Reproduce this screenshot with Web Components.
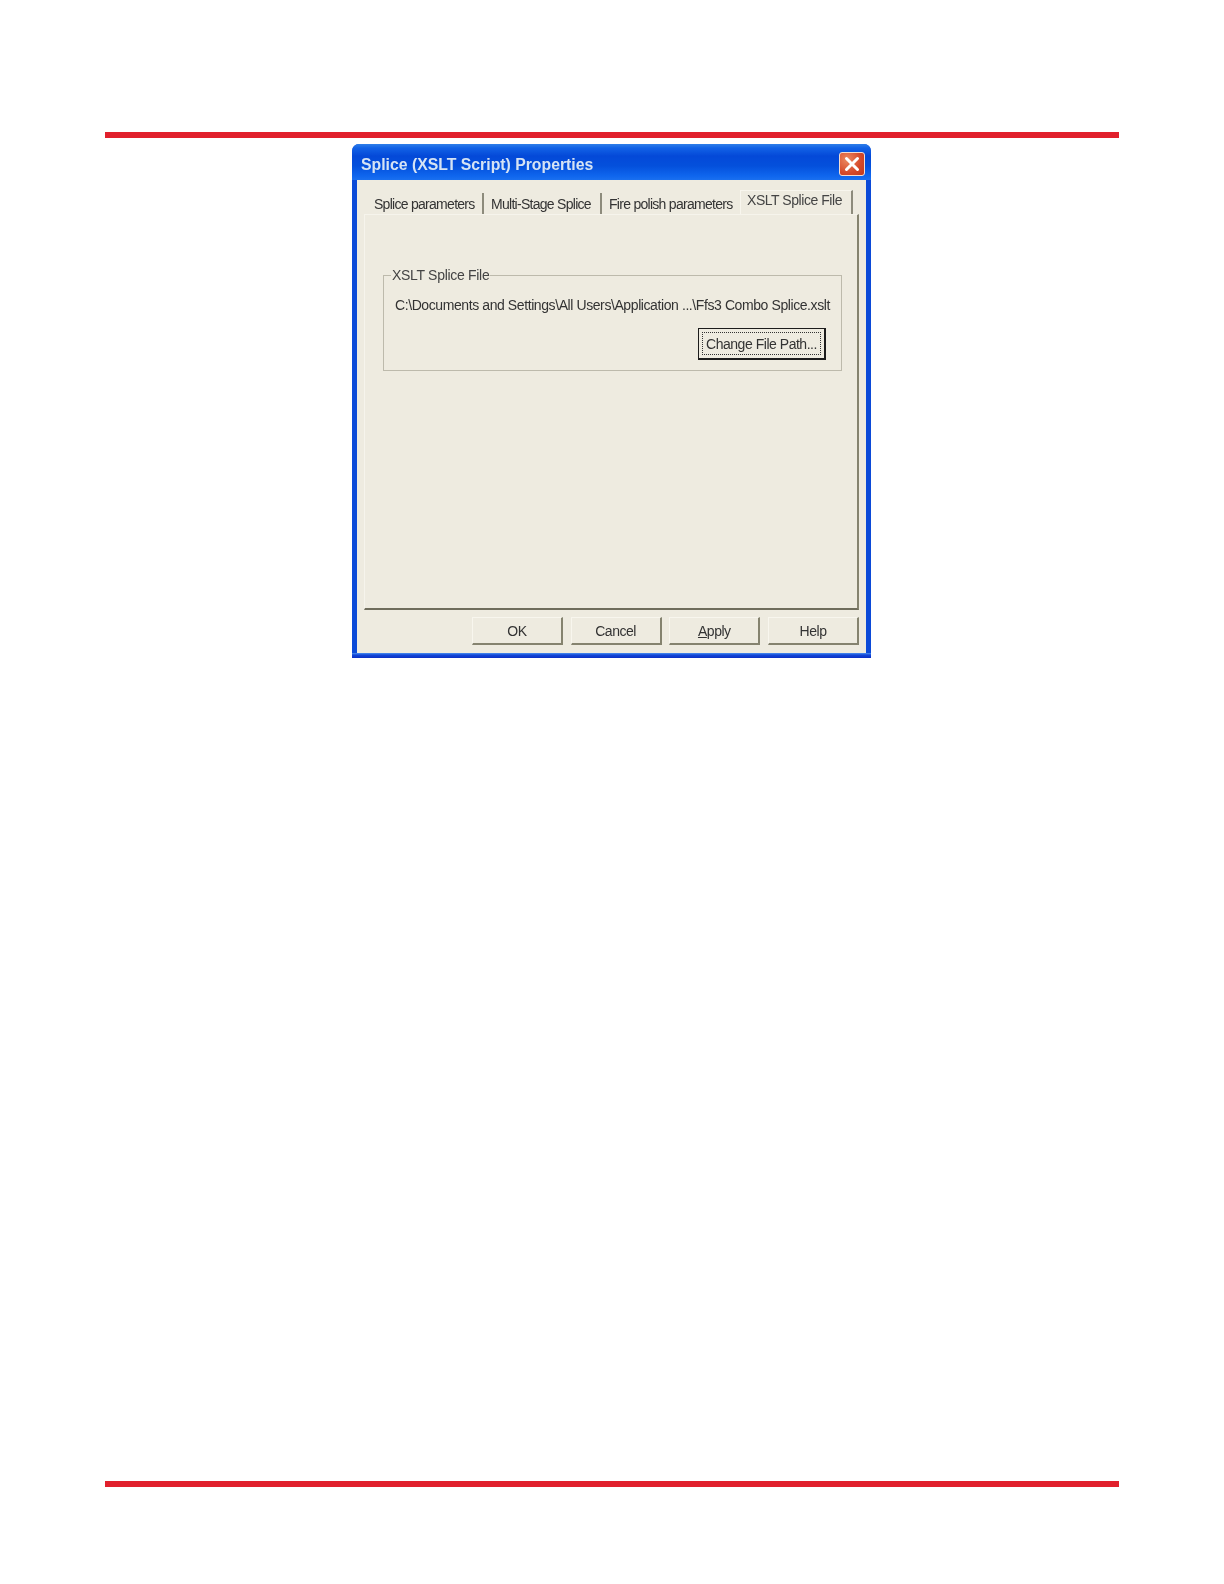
<!DOCTYPE html>
<html>
<head>
<meta charset="utf-8">
<title>Splice (XSLT Script) Properties</title>
<style>
	html, body { margin: 0; background: #fff; }
	body { font-family: "Liberation Sans", Arial, sans-serif; color: #222; }
</style>
</head>
<body>
<manual-page>
	<xp-dialog heading="Splice (XSLT Script) Properties">
		<xp-tab slot="tabs" style="width:118px;padding-left:8px">Splice parameters</xp-tab>
		<xp-tab slot="tabs" style="width:118px">Multi-Stage Splice</xp-tab>
		<xp-tab slot="tabs" style="width:138px;border-right:0">Fire polish parameters</xp-tab>
		<xp-tab slot="tabs" style="width:113px" active>XSLT Splice File</xp-tab>

		<xp-groupbox legend="XSLT Splice File">
			<span slot="path">C:\Documents and Settings\All Users\Application ...\Ffs3 Combo Splice.xslt</span>
			<xp-button default style="width:128px;height:32px">Change File Path...</xp-button>
		</xp-groupbox>

		<xp-button slot="footer">OK</xp-button>
		<xp-button slot="footer">Cancel</xp-button>
		<xp-button slot="footer"><u>A</u>pply</xp-button>
		<xp-button slot="footer">Help</xp-button>
	</xp-dialog>
</manual-page>

<script>
////////////////////////////////////////// Manual page //////////////////////////////////////////
class ManualPage extends HTMLElement {
	constructor(...args) {
		super(...args);
		this.attachShadow({ mode: 'open' }).innerHTML = `
<style>
	:host { display: block; width: 1224px; height: 1584px; padding-top: 132px; box-sizing: border-box; }
	.rule { height: 6px; width: 1014px; margin-left: 105px; background: #e1202c; }
	.content { margin: 6px 0 823px 352px; }
</style>
<div class="rule"></div>
<div class="content"><slot></slot></div>
<div class="rule"></div>`;
	}
}
customElements.define("manual-page", ManualPage);

///////////////////////////////////////// Dialog window /////////////////////////////////////////
class XpDialog extends HTMLElement {
	constructor(...args) {
		super(...args);
		this.attachShadow({ mode: 'open' }).innerHTML = `
<style>
	:host { display: block; width: 519px; height: 514px; filter: blur(0.45px); }
	.window { display: flex; flex-direction: column; height: 100%; border-radius: 7px 7px 0 0; overflow: hidden; background: #0b4ad8; }
	.title {
		flex: none; height: 36px; display: flex; align-items: center; justify-content: space-between;
		padding: 0 6px 0 9px;
		background: linear-gradient(#2f7fe8 0, #1262e6 4px, #0449d8 12px, #0450dc 22px, #0f66ee 32px, #1a70f0 36px);
	}
	.title span { font: bold 15.8px "Liberation Sans", sans-serif; color: #d5e3f4; padding-top: 5px; }
	.close {
		width: 24px; height: 22px; margin-top: 4px; border: 1px solid #f3ddd2; border-radius: 3px;
		background: radial-gradient(circle at 30% 30%, #ec8a62, #d5492a 60%, #c0391c);
		display: flex; align-items: center; justify-content: center;
	}
	.client {
		flex: 1; display: flex; flex-direction: column; margin: 0 5px; padding: 10px 7px 8px 7px;
		background: #eeebe0;
	}
	.tabs { flex: none; display: flex; align-items: flex-end; height: 24px; padding-left: 2px; }
	.page {
		flex: none; height: 396px; box-sizing: border-box; padding: 52px 0 0 18px;
		border-right: 2px solid #85836f; border-bottom: 2px solid #6f6d5c;
		border-left: 1px solid #f6f4ec; border-top: 1px solid #f6f4ec;
	}
	.footer { flex: none; display: flex; justify-content: flex-end; gap: 7.7px; margin-top: 7px; }
	.edge { flex: none; height: 5px; background: linear-gradient(#4a8ff0 0, #1348d8 2px, #0a2fc4 5px); }
</style>
<div class="window">
	<div class="title">
		<span></span>
		<div class="close">
			<svg width="16" height="16" viewBox="0 0 16 16"><path d="M2.5 2.5 13.5 13.5M13.5 2.5 2.5 13.5" stroke="#fff" stroke-width="3" stroke-linecap="round"/></svg>
		</div>
	</div>
	<div class="client">
		<div class="tabs"><slot name="tabs"></slot></div>
		<div class="page"><slot></slot></div>
		<div class="footer"><slot name="footer"></slot></div>
	</div>
	<div class="edge"></div>
</div>`;
	}

	connectedCallback() {
		this.shadowRoot.querySelector(".title span").textContent = this.getAttribute("heading");
	}
}
customElements.define("xp-dialog", XpDialog);

////////////////////////////////////////////// Tab //////////////////////////////////////////////
class XpTab extends HTMLElement {
	constructor(...args) {
		super(...args);
		this.attachShadow({ mode: 'open' }).innerHTML = `
<style>
	:host {
		display: flex; flex: none; box-sizing: border-box; height: 21px; padding-left: 7px; align-items: center;
		font-size: 14px; letter-spacing: -0.72px; white-space: nowrap; color: #333; border-right: 2px solid #8d8b7c;
		background: #eeebe0;
	}
	:host([active]) {
		height: 24px; padding: 0 0 5px 6px; letter-spacing: -0.45px; border-top: 1px solid #f8f6ee; border-left: 1px solid #f8f6ee;
		color: #444;
	}
</style>
<slot></slot>`;
	}
}
customElements.define("xp-tab", XpTab);

/////////////////////////////////////////// Group box ///////////////////////////////////////////
class XpGroupbox extends HTMLElement {
	constructor(...args) {
		super(...args);
		this.attachShadow({ mode: 'open' }).innerHTML = `
<style>
	:host { display: block; width: 459px; font-size: 14px; color: #333; }
	fieldset { margin: 0; min-width: 0; height: 103.5px; box-sizing: border-box; padding: 14px 15px 0 11px; border: 1px solid #bdbaac; }
	legend { padding: 0 1px; margin-left: -4px; line-height: 16px; letter-spacing: -0.3px; color: #444; }
	.path { height: 17px; line-height: 17px; white-space: nowrap; letter-spacing: -0.41px; }
	.actions { display: flex; justify-content: flex-end; margin-top: 14px; }
</style>
<fieldset>
	<legend></legend>
	<div class="path"><slot name="path"></slot></div>
	<div class="actions"><slot></slot></div>
</fieldset>`;
	}

	connectedCallback() {
		this.shadowRoot.querySelector("legend").textContent = this.getAttribute("legend");
	}
}
customElements.define("xp-groupbox", XpGroupbox);

///////////////////////////////////////////// Button ////////////////////////////////////////////
class XpButton extends HTMLElement {
	constructor(...args) {
		super(...args);
		this.attachShadow({ mode: 'open' }).innerHTML = `
<style>
	:host {
		display: block; box-sizing: border-box; width: 91px; height: 28px; font-size: 14px; letter-spacing: -0.47px; color: #333;
		background: #eeebe0; border-top: 1px solid #f8f6ee; border-left: 1px solid #f8f6ee;
		border-right: 2px solid #85836f; border-bottom: 2px solid #85836f;
	}
	:host([default]) { border: 2px solid #1c1c1c; border-top-width: 1px; border-left-width: 1px; }
	.face { box-sizing: border-box; height: 100%; display: flex; }
	:host([default]) .face { padding: 3px; }
	.label { flex: 1; box-sizing: border-box; display: flex; align-items: center; justify-content: center; white-space: nowrap; }
	:host([default]) .label { border: 1px dotted #333; }
</style>
<div class="face"><div class="label"><span><slot></slot></span></div></div>`;
	}
}
customElements.define("xp-button", XpButton);
</script>
</body>
</html>
